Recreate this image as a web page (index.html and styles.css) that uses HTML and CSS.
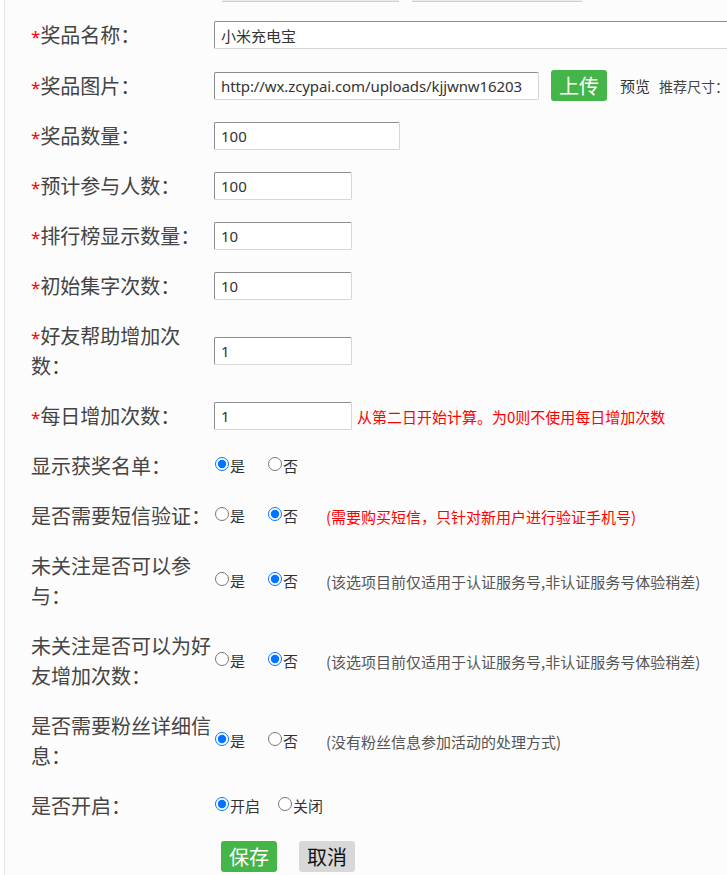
FILE: index.html
```html
<!DOCTYPE html>
<html lang="zh-CN">
<head>
  <meta charset="UTF-8" />
  <meta name="viewport" content="width=device-width, initial-scale=1" />
  <title>奖品设置</title>
  <link rel="stylesheet" href="styles.css">
</head>
<body>

  <div class="page">
    <div class="top-strip">
      <span class="stub stub-a"></span>
      <span class="stub stub-b"></span>
    </div>

    <form class="form">
      <div class="row">
        <label class="label"><em>*</em>奖品名称：</label>
        <div class="field"><input class="ipt ipt-full" type="text" value="小米充电宝" /></div>
      </div>

      <div class="row">
        <label class="label"><em>*</em>奖品图片：</label>
        <div class="field">
          <input class="ipt ipt-url" type="text" value="http://wx.zcypai.com/uploads/kjjwnw16203" />
          <button type="button" class="btn btn-green btn-upload">上传</button>
          <span class="preview">预览</span>
          <span class="size-tip">推荐尺寸：</span>
        </div>
      </div>

      <div class="row">
        <label class="label"><em>*</em>奖品数量：</label>
        <div class="field"><input class="ipt ipt-mid" type="text" value="100" /></div>
      </div>

      <div class="row">
        <label class="label"><em>*</em>预计参与人数：</label>
        <div class="field"><input class="ipt ipt-short" type="text" value="100" /></div>
      </div>

      <div class="row">
        <label class="label"><em>*</em>排行榜显示数量：</label>
        <div class="field"><input class="ipt ipt-short" type="text" value="10" /></div>
      </div>

      <div class="row">
        <label class="label"><em>*</em>初始集字次数：</label>
        <div class="field"><input class="ipt ipt-short" type="text" value="10" /></div>
      </div>

      <div class="row">
        <label class="label"><em>*</em>好友帮助增加次数：</label>
        <div class="field"><input class="ipt ipt-short" type="text" value="1" /></div>
      </div>

      <div class="row">
        <label class="label"><em>*</em>每日增加次数：</label>
        <div class="field">
          <input class="ipt ipt-short" type="text" value="1" />
          <span class="hint-red">从第二日开始计算。为0则不使用每日增加次数</span>
        </div>
      </div>

      <div class="row">
        <label class="label">显示获奖名单：</label>
        <div class="field">
          <label class="opt"><input type="radio" name="showlist" checked />是</label>
          <label class="opt"><input type="radio" name="showlist" />否</label>
        </div>
      </div>

      <div class="row">
        <label class="label">是否需要短信验证：</label>
        <div class="field">
          <label class="opt"><input type="radio" name="sms" />是</label>
          <label class="opt"><input type="radio" name="sms" checked />否</label>
          <span class="note note-red">(需要购买短信，只针对新用户进行验证手机号)</span>
        </div>
      </div>

      <div class="row">
        <label class="label">未关注是否可以参与：</label>
        <div class="field">
          <label class="opt"><input type="radio" name="unfollow" />是</label>
          <label class="opt"><input type="radio" name="unfollow" checked />否</label>
          <span class="note">(该选项目前仅适用于认证服务号,非认证服务号体验稍差)</span>
        </div>
      </div>

      <div class="row">
        <label class="label">未关注是否可以为好友增加次数：</label>
        <div class="field">
          <label class="opt"><input type="radio" name="unfollowhelp" />是</label>
          <label class="opt"><input type="radio" name="unfollowhelp" checked />否</label>
          <span class="note">(该选项目前仅适用于认证服务号,非认证服务号体验稍差)</span>
        </div>
      </div>

      <div class="row">
        <label class="label">是否需要粉丝详细信息：</label>
        <div class="field">
          <label class="opt"><input type="radio" name="fans" checked />是</label>
          <label class="opt"><input type="radio" name="fans" />否</label>
          <span class="note">(没有粉丝信息参加活动的处理方式)</span>
        </div>
      </div>

      <div class="row">
        <label class="label">是否开启：</label>
        <div class="field">
          <label class="opt opt-tight"><input type="radio" name="open" checked />开启</label>
          <label class="opt"><input type="radio" name="open" />关闭</label>
        </div>
      </div>

      <div class="row row-actions">
        <div class="label"></div>
        <div class="field">
          <button type="button" class="btn btn-green">保存</button>
          <button type="button" class="btn btn-gray">取消</button>
        </div>
      </div>
    </form>
  </div>

</body>
</html>
```

FILE: styles.css
```css
body {
  margin: 0;
  background: #fff;
  font-family: "Noto Sans", "Noto Sans CJK SC", sans-serif;
  color: #333;
  overflow: hidden;
}

.page {
  margin-left: 4px;
  min-height: 875px;
  background: #fcfcfc;
  border-left: 1px solid #e4e4e4;
}

.top-strip {
  display: flex;
  height: 2px;
  padding-left: 217px;
  gap: 13px;
}

.stub {
  display: block;
  height: 1px;
  background: #ececec;
  border-bottom: 1px solid #d0d0d0;
}

.stub-a {
  width: 177px;
}

.stub-b {
  width: 170px;
}

.form {
  padding-top: 18px;
}

.row {
  display: flex;
  align-items: center;
  margin-bottom: 20px;
}

.label {
  box-sizing: border-box;
  flex: none;
  width: 209px;
  min-height: 30px;
  padding-left: 26px;
  padding-right: 2px;
  font-family: "Noto Sans CJK SC", sans-serif;
  font-size: 20px;
  line-height: 30px;
  color: #444;
}

.label em {
  font-style: normal;
  font-family: "Noto Sans", sans-serif;
  font-size: 17px;
  line-height: 1;
  color: #f00;
}

.field {
  display: flex;
  align-items: center;
  flex: none;
  white-space: nowrap;
}

.ipt {
  box-sizing: border-box;
  height: 28px;
  padding: 0 6px;
  border: 1px solid;
  border-color: #8d8d8d #d6d6d6 #d6d6d6 #8d8d8d;
  border-radius: 2px;
  background: #fff;
  font-family: "Noto Sans", "Noto Sans CJK SC", sans-serif;
  font-size: 15px;
  color: #333;
  outline: none;
}

.ipt-full {
  width: 530px;
}

.ipt-url {
  width: 325px;
  padding-right: 3px;
  letter-spacing: -0.1px;
}

.ipt-mid {
  width: 186px;
}

.ipt-short {
  width: 138px;
}

.btn {
  height: 31px;
  padding: 0 8px;
  border: none;
  border-radius: 3px;
  font-family: "Noto Sans CJK SC", sans-serif;
  font-size: 20px;
  line-height: 31px;
  cursor: pointer;
}

.btn-green {
  background: #44b549;
  color: #fff;
}

.btn-gray {
  background: #d8d8d8;
  color: #111;
  margin-left: 22px;
}

.btn-upload {
  margin-left: 12px;
}

.preview {
  margin-left: 13px;
  font-family: "Noto Sans CJK SC", sans-serif;
  font-size: 15px;
  color: #333;
}

.size-tip {
  margin-left: 9px;
  font-family: "Noto Sans CJK SC", sans-serif;
  font-size: 14px;
  color: #444;
}

.hint-red {
  margin-left: 5px;
  font-family: "Noto Sans CJK SC", sans-serif;
  font-size: 15px;
  color: #f00;
}

.opt {
  display: flex;
  align-items: center;
  margin-right: 22px;
  font-family: "Noto Sans CJK SC", sans-serif;
  font-size: 15px;
  line-height: 20px;
  color: #333;
}

.opt input {
  width: 14px;
  height: 14px;
  margin: 0 1px 4px 1px;
}

.opt-tight {
  margin-right: 17px;
}

.opt:last-of-type {
  margin-right: 0;
}

.note {
  margin-left: 28px;
  font-family: "Noto Sans CJK SC", sans-serif;
  font-size: 15px;
  color: #555;
}

.note-red {
  color: #f00;
}

.row-actions .field {
  padding-left: 7px;
}
```
